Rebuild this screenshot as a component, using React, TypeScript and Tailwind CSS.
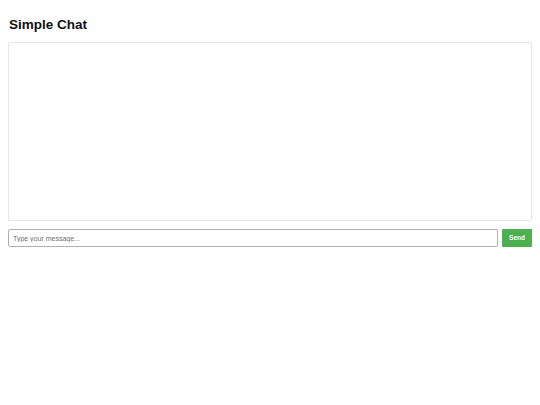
import { useState } from 'react';

export default function App() {
  const [draft, setDraft] = useState('');
  const [messages, setMessages] = useState<string[]>([]);

  const handleSend = () => {
    const text = draft.trim();
    if (!text) return;
    setMessages((prev) => [...prev, text]);
    setDraft('');
  };

  return (
    <div className="min-h-screen bg-white p-2 font-['Liberation_Sans',Arial,sans-serif] text-black">
      <h1 className="mb-[10px] ml-[1px] mt-[9px] text-[13.5px] font-bold leading-[15px] text-[#111]">Simple Chat</h1>
      <div className="h-[179px] overflow-y-auto rounded-[2px] border border-[#e6e6e6] p-1">
        {messages.map((message, index) => (
          <p key={index} className="text-[7px] leading-[10px] text-[#333]">
            {message}
          </p>
        ))}
      </div>
      <div className="mt-2 flex gap-[4.5px]">
        <input
          value={draft}
          onChange={(event) => setDraft(event.target.value)}
          onKeyDown={(event) => event.key === 'Enter' && handleSend()}
          placeholder="Type your message..."
          className="h-[18px] flex-1 rounded-[2px] border border-[#b0b0b0] px-[4px] text-[7px] text-[#333] outline-none placeholder:text-[#6f6f6f]"
        />
        <button
          onClick={handleSend}
          className="h-[18px] w-[30px] rounded-[1px] bg-[#4caf50] text-[6.5px] font-semibold text-white"
        >
          Send
        </button>
      </div>
    </div>
  );
}
